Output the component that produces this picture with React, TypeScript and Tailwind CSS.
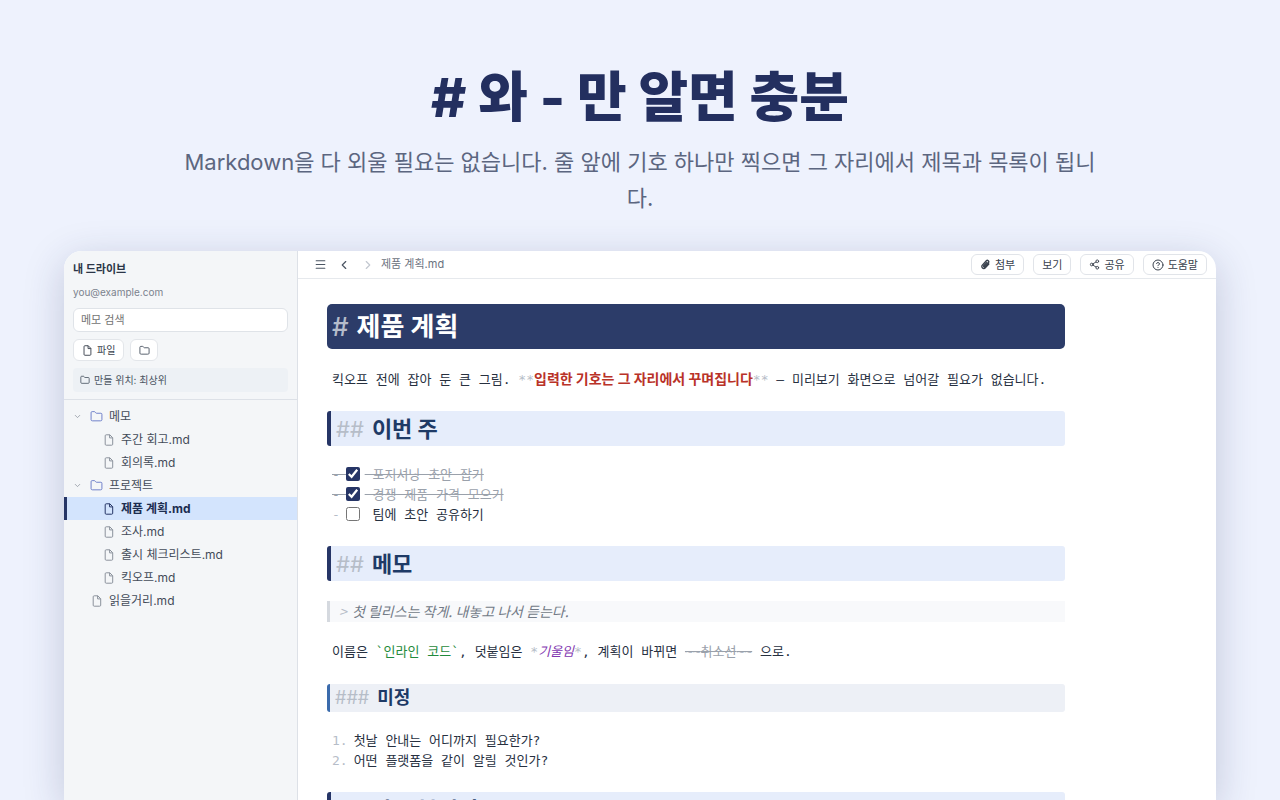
import { useState } from "react";
import type { ReactNode } from "react";
import { ChevronDown, ChevronLeft, ChevronRight, CircleHelp, File, Folder, Menu, Share2 } from "lucide-react";

type Entry = { name: string; kind: "folder" | "file"; nested?: boolean };

const entries: Entry[] = [
  { name: "메모", kind: "folder" },
  { name: "주간 회고.md", kind: "file", nested: true },
  { name: "회의록.md", kind: "file", nested: true },
  { name: "프로젝트", kind: "folder" },
  { name: "제품 계획.md", kind: "file", nested: true },
  { name: "조사.md", kind: "file", nested: true },
  { name: "출시 체크리스트.md", kind: "file", nested: true },
  { name: "킥오프.md", kind: "file", nested: true },
  { name: "읽을거리.md", kind: "file" },
];

const initialTasks = [
  { text: "포지셔닝 초안 잡기", done: true },
  { text: "경쟁 제품 가격 모으기", done: true },
  { text: "팀에 초안 공유하기", done: false },
];

function Clip() {
  return (
    <svg viewBox="0 0 16 16" className="size-[11px]" aria-hidden="true">
      <path
        d="M12.8 7.2 7.7 12.8a2.9 2.9 0 0 1-4.3-3.9l5.8-6.4a2.1 2.1 0 0 1 3.1 2.8L7 11.1a1 1 0 0 1-1.5-1.3L10 4.9"
        fill="none"
        stroke="currentColor"
        strokeWidth="2"
        strokeLinecap="round"
      />
    </svg>
  );
}

// narrow dog-eared page used in the tree and on the new-file button
function PageIcon({ className }: { className: string }) {
  return (
    <svg viewBox="0 0 12 12" className={className} fill="none" stroke="currentColor" strokeLinejoin="round" aria-hidden="true">
      <path d="M3.2.8h3.6l2.9 2.9v6.5a1 1 0 0 1-1 1H3.2a1 1 0 0 1-1-1V1.8a1 1 0 0 1 1-1Z" />
      <path d="M6.6.8v3.1h3.1" />
    </svg>
  );
}

function ToolButton({ label, icon }: { label: string; icon?: ReactNode }) {
  return (
    <button className="flex h-[21px] items-center gap-1 rounded-md border border-[#e1e4e9] bg-white px-2 text-[11px] leading-4 text-[#39414d]">
      {icon}
      {label}
    </button>
  );
}

function TreeRow({ entry, active, onSelect }: { entry: Entry; active: boolean; onSelect: () => void }) {
  const isFolder = entry.kind === "folder";
  const indent = isFolder ? "pl-[6px]" : entry.nested ? "pl-[36px]" : "pl-[24px]";
  return (
    <li>
      <button
        onClick={onSelect}
        className={`flex h-[23px] w-full items-center border-l-3 text-left text-xs ${indent} ${
          active ? "border-[#263566] bg-[#d3e4fd] font-bold text-[#1c2d50]" : "border-transparent text-[#434b58]"
        }`}
      >
        {isFolder ? (
          <>
            <ChevronDown className="mr-2 size-[9px] text-[#8b929c]" />
            <Folder className="mr-1.5 size-[13px] text-[#6a7cc8]" strokeWidth={1.75} />
          </>
        ) : (
          <PageIcon className={`mr-1.5 size-3 ${active ? "text-[#263566]" : "text-[#8b929c]"}`} />
        )}
        {entry.name}
      </button>
    </li>
  );
}

function SectionHeading({ children }: { children: ReactNode }) {
  return (
    <h2 className="flex h-[35px] items-center gap-2 rounded-[3px] border-l-4 border-[#263566] bg-[#e6edfb] pl-[5px] font-[family-name:Inter,'Noto_Sans_CJK_KR',sans-serif] text-[22px] font-bold text-[#1e3a66]">
      <span className="font-normal text-[#b6bdc8]">##</span>
      {children}
    </h2>
  );
}

export default function App() {
  const [selected, setSelected] = useState("제품 계획.md");
  const [tasks, setTasks] = useState(initialTasks);

  const toggle = (index: number) =>
    setTasks(tasks.map((t, i) => (i === index ? { ...t, done: !t.done } : t)));

  return (
    <div className="flex h-screen flex-col overflow-hidden bg-[#eef2fd] px-16 font-[family-name:Inter,'Noto_Sans_CJK_KR',sans-serif]">
      <header className="px-28 pt-[60px] text-center">
        <h1 className="text-[54px] leading-[76px] font-extrabold text-[#232f5f]"># 와 - 만 알면 충분</h1>
        <p className="mt-2 text-[22px] leading-9 break-all text-[#5c6680]">
          Markdown을 다 외울 필요는 없습니다. 줄 앞에 기호 하나만 찍으면 그 자리에서 제목과 목록이 됩니다.
        </p>
      </header>

      <div className="mt-[35px] flex min-h-0 flex-1 overflow-hidden rounded-t-[18px] bg-white shadow-[0_10px_40px_rgba(35,47,95,0.22)]">
        <aside className="w-[234px] shrink-0 border-r border-[#dde1e7] bg-[#f4f6f8]">
          <div className="border-b border-[#dde1e7] px-[9px] pt-[9px] pb-[7px]">
            <h2 className="text-[11px] leading-[18px] font-bold text-[#2b3648]">내 드라이브</h2>
            <p className="mt-1.5 text-[10px] leading-4 text-[#7b828d]">you@example.com</p>
            <input
              type="search"
              aria-label="메모 검색"
              placeholder="메모 검색"
              className="mt-2 block h-6 w-full rounded-md border border-[#dfe3e8] bg-white px-[7px] text-[11px] placeholder:text-[#737373]"
            />
            <div className="mt-[7px] flex gap-1.5">
              <button className="flex h-[22px] items-center gap-1 rounded-md border border-[#e3e6ea] bg-white px-2 text-[10px] text-[#39414d]">
                <PageIcon className="size-[11px]" />
                파일
              </button>
              <button
                aria-label="새 폴더"
                className="flex h-[22px] w-7 items-center justify-center rounded-md border border-[#e3e6ea] bg-white text-[#4b5563]"
              >
                <Folder className="size-[11px]" />
              </button>
            </div>
            <p className="mt-[7px] flex h-6 items-center gap-1 rounded bg-[#edf1f5] px-[7px] text-[10px] text-[#4b5563]">
              <Folder className="size-2.5" />
              만들 위치: 최상위
            </p>
          </div>
          <ul className="pt-[5px]">
            {entries.map((entry) => (
              <TreeRow
                key={entry.name}
                entry={entry}
                active={entry.name === selected}
                onSelect={() => entry.kind === "file" && setSelected(entry.name)}
              />
            ))}
          </ul>
        </aside>

        <main className="min-w-0 flex-1">
          <div className="flex h-7 items-center border-b border-[#e6e9ed] pr-[9px] pl-4">
            <button aria-label="메뉴" className="text-[#4b5563]">
              <Menu className="size-[13px]" />
            </button>
            <button aria-label="뒤로" className="ml-2.5 text-[#4b5563]">
              <ChevronLeft className="size-[14px]" />
            </button>
            <button aria-label="앞으로" className="ml-2.5 text-[#c3c8d0]">
              <ChevronRight className="size-[14px]" />
            </button>
            <span className="ml-1.5 text-[11px] text-[#6b7280]">{selected}</span>
            <div className="ml-auto flex gap-[9px]">
              <ToolButton label="첨부" icon={<Clip />} />
              <ToolButton label="보기" />
              <ToolButton label="공유" icon={<Share2 className="size-[11px]" />} />
              <ToolButton label="도움말" icon={<CircleHelp className="size-3" />} />
            </div>
          </div>

          <article className="mt-[25px] mr-8 ml-[29px] max-w-[738px] font-['DejaVu_Sans_Mono','Noto_Sans_CJK_KR',monospace] text-[13px] leading-5 text-[#27303f]">
            <h1 className="flex h-[45px] items-center gap-2 rounded-[5px] bg-[#2c3c69] px-[5px] font-[family-name:Inter,'Noto_Sans_CJK_KR',sans-serif] text-[26px] font-bold text-white">
              <span className="font-medium text-[#b5bccb]">#</span>
              제품 계획
            </h1>
            <p className="mt-[19px] px-[5px]">
              킥오프 전에 잡아 둔 큰 그림. <span className="text-[#b6bdc8]">**</span>
              <strong className="font-['Noto_Sans_CJK_KR',sans-serif] text-[14px] text-[#b93228]">
                입력한 기호는 그 자리에서 꾸며집니다
              </strong>
              <span className="text-[#b6bdc8]">**</span> — 미리보기 화면으로 넘어갈 필요가 없습니다.
            </p>

            <div className="mt-[21px]">
              <SectionHeading>이번 주</SectionHeading>
            </div>
            <ul className="mt-[19px] px-[5px]">
              {tasks.map((task, i) => (
                <li key={task.text}>
                  <label
                    className={`flex w-fit items-center whitespace-pre ${task.done ? "text-[#9aa1ab] line-through" : ""}`}
                  >
                    <span className={task.done ? "" : "text-[#b6bdc8]"}>{"- "}</span>
                    <input
                      type="checkbox"
                      checked={task.done}
                      onChange={() => toggle(i)}
                      className="mr-[5px] mb-[3px] ml-[-2px] size-[14px] accent-[#263566]"
                    />
                    <span>{" " + task.text}</span>
                  </label>
                </li>
              ))}
            </ul>

            <div className="mt-[21px]">
              <SectionHeading>메모</SectionHeading>
            </div>
            <blockquote className="mt-5 border-l-3 border-[#d5d9df] bg-[#f8f9fb] pl-[9px] font-['Noto_Sans_CJK_KR',sans-serif] text-[14px] leading-[21px] text-[#737b87] italic">
              <span className="mr-0.5 text-[#b6bdc8]">&gt;</span> 첫 릴리스는 작게. 내놓고 나서 듣는다.
            </blockquote>
            <p className="mt-5 px-[5px]">
              이름은 <code className="font-[inherit] text-[#1f8a3b]">`인라인 코드`</code>, 덧붙임은{" "}
              <span className="text-[#b6bdc8] italic">*</span>
              <em className="text-[#8236b0]">기울임</em>
              <span className="text-[#b6bdc8] italic">*</span>, 계획이 바뀌면{" "}
              <del className="text-[#9aa1ab]">
                <span className="text-[#b6bdc8]">~~</span>취소선<span className="text-[#b6bdc8]">~~</span>
              </del>{" "}
              으로.
            </p>

            <h3 className="mt-[22px] flex h-7 items-center gap-2 rounded-[3px] border-l-3 border-[#3b6bac] bg-[#edf0f6] pl-[5px] font-[family-name:Inter,'Noto_Sans_CJK_KR',sans-serif] text-lg font-bold text-[#1e3a66]">
              <span className="font-normal text-[#b6bdc8]">###</span>
              미정
            </h3>
            <ol className="mt-[19px] px-[5px]">
              {["첫날 안내는 어디까지 필요한가?", "어떤 플랫폼을 같이 알릴 것인가?"].map((line, i) => (
                <li key={line} className="flex gap-1.5">
                  <span className="text-[#b6bdc8]">{i + 1}.</span>
                  {line}
                </li>
              ))}
            </ol>

            <div className="mt-[21px]">
              <SectionHeading>다시 볼거리</SectionHeading>
            </div>
          </article>
        </main>
      </div>
    </div>
  );
}
